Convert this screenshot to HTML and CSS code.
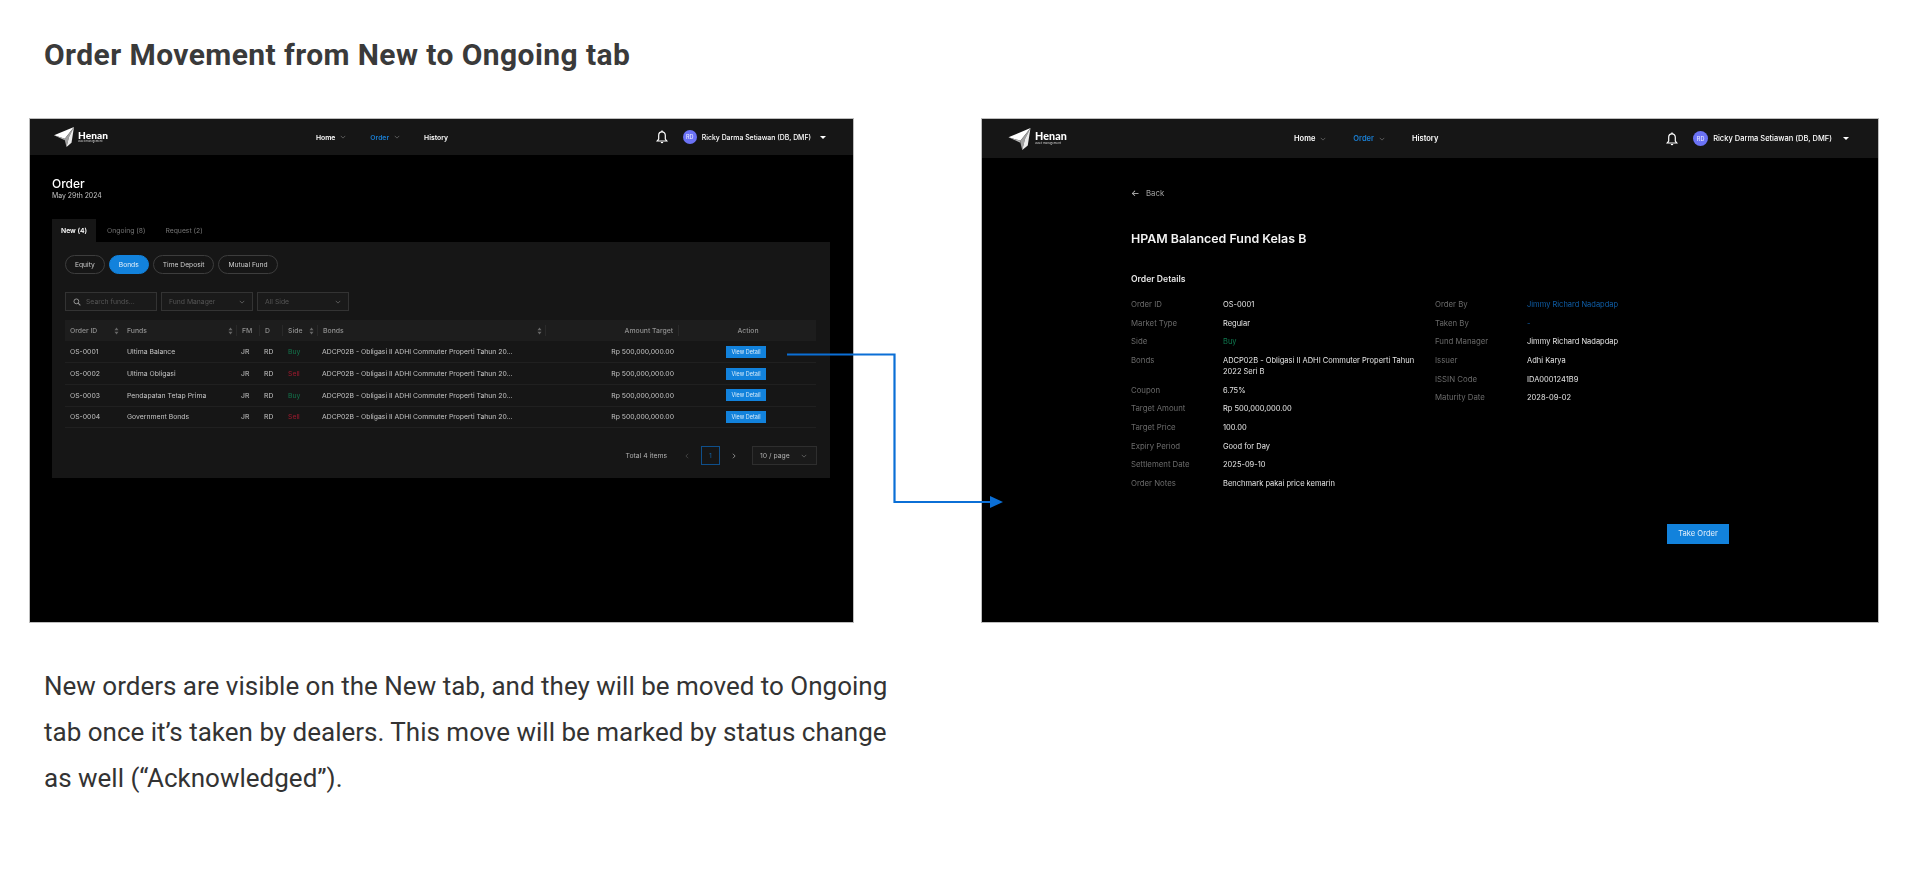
FILE: index.html
```html
<!DOCTYPE html>
<html lang="en">
<head>
<meta charset="utf-8">
<title>Order Movement from New to Ongoing tab</title>
<link rel="stylesheet" href="styles.css">
</head>
<body>
<svg class="sprite" width="0" height="0" aria-hidden="true">
  <symbol id="mark" viewBox="0 0 24 24">
    <polygon points="0,10 24,0 13,14" fill="#fff"/>
    <polygon points="0,10 13,14 13,16" fill="#b9b9b9"/>
    <polygon points="24,0 18,12 15,24 13,16 13,14" fill="#a0a0a0"/>
    <polygon points="24,0 21,19 15,24 18,12" fill="#ececec"/>
  </symbol>
  <symbol id="chev" viewBox="0 0 8 8"><path d="M1 2.5 4 5.5 7 2.5" fill="none" stroke="currentColor" stroke-width=".9"/></symbol>
  <symbol id="bell" viewBox="0 0 12 14">
    <path d="M6 1.8C3.9 1.8 2.7 3.4 2.7 5.3V9L1.2 11H10.8L9.3 9V5.3C9.3 3.4 8.1 1.8 6 1.8Z" fill="none" stroke="#fff" stroke-width="1.2"/>
    <path d="M5.3 0.4H6.7V2H5.3ZM4.7 12H7.3A1.3 1.3 0 0 1 4.7 12Z" fill="#fff"/>
  </symbol>
  <symbol id="sort" viewBox="0 0 6 10"><path d="M3 .5 5.5 4H.5ZM3 9.5 .5 6H5.5Z" fill="#666"/></symbol>
  <symbol id="search" viewBox="0 0 10 10"><circle cx="4.2" cy="4.2" r="3" fill="none" stroke="#999" stroke-width="1.2"/><path d="M6.4 6.4 9.2 9.2" stroke="#999" stroke-width="1.3"/></symbol>
</svg>

<h1 class="title">Order Movement from New to Ongoing tab</h1>

<div class="shots">
  <section class="screen screen-list">
    <header class="topbar">
      <div class="logo">
        <svg class="logo-mark"><use href="#mark"/></svg>
        <div class="logo-text"><b>Henan</b><small>asset management</small></div>
      </div>
      <nav class="nav">
        <span class="nav-item">Home <svg class="chev"><use href="#chev"/></svg></span>
        <span class="nav-item active">Order <svg class="chev"><use href="#chev"/></svg></span>
        <span class="nav-item">History</span>
      </nav>
      <div class="user">
        <svg class="bell"><use href="#bell"/></svg>
        <span class="avatar">RD</span>
        <span class="user-name">Ricky Darma Setiawan (DB, DMF)</span>
        <span class="caret"></span>
      </div>
    </header>
    <main class="list-body">
      <h2 class="page-title">Order</h2>
      <p class="page-date">May 29th 2024</p>
      <div class="tabs">
        <span class="tab active">New (4)</span>
        <span class="tab">Ongoing (8)</span>
        <span class="tab">Request (2)</span>
      </div>
      <div class="panel">
        <div class="pills">
          <span class="pill">Equity</span>
          <span class="pill on">Bonds</span>
          <span class="pill">Time Deposit</span>
          <span class="pill">Mutual Fund</span>
        </div>
        <div class="filters">
          <span class="field field-search"><svg class="search"><use href="#search"/></svg>Search funds...</span>
          <span class="field">Fund Manager <svg class="chev"><use href="#chev"/></svg></span>
          <span class="field">All Side <svg class="chev"><use href="#chev"/></svg></span>
        </div>
        <table class="orders">
          <colgroup>
            <col class="c-id"><col class="c-fund"><col class="c-fm"><col class="c-d"><col class="c-side"><col class="c-bond"><col class="c-amt"><col class="c-act">
          </colgroup>
          <thead>
            <tr>
              <th><div class="th plain">Order ID <svg class="sort"><use href="#sort"/></svg></div></th>
              <th><div class="th">Funds <svg class="sort"><use href="#sort"/></svg></div></th>
              <th><div class="th">FM</div></th>
              <th><div class="th">D</div></th>
              <th><div class="th">Side <svg class="sort"><use href="#sort"/></svg></div></th>
              <th><div class="th">Bonds <svg class="sort"><use href="#sort"/></svg></div></th>
              <th><div class="th th-right">Amount Target</div></th>
              <th><div class="th th-center plain">Action</div></th>
            </tr>
          </thead>
          <tbody>
            <tr><td>OS-0001</td><td>Ultima Balance</td><td>JR</td><td>RD</td><td class="buy">Buy</td><td>ADCP02B - Obligasi II ADHI Commuter Properti Tahun 20...</td><td class="amt">Rp 500,000,000.00</td><td class="act"><span class="btn-view">View Detail</span></td></tr>
            <tr><td>OS-0002</td><td>Ultima Obligasi</td><td>JR</td><td>RD</td><td class="sell">Sell</td><td>ADCP02B - Obligasi II ADHI Commuter Properti Tahun 20...</td><td class="amt">Rp 500,000,000.00</td><td class="act"><span class="btn-view">View Detail</span></td></tr>
            <tr><td>OS-0003</td><td>Pendapatan Tetap Prima</td><td>JR</td><td>RD</td><td class="buy">Buy</td><td>ADCP02B - Obligasi II ADHI Commuter Properti Tahun 20...</td><td class="amt">Rp 500,000,000.00</td><td class="act"><span class="btn-view">View Detail</span></td></tr>
            <tr><td>OS-0004</td><td>Government Bonds</td><td>JR</td><td>RD</td><td class="sell">Sell</td><td>ADCP02B - Obligasi II ADHI Commuter Properti Tahun 20...</td><td class="amt">Rp 500,000,000.00</td><td class="act"><span class="btn-view">View Detail</span></td></tr>
          </tbody>
        </table>
        <div class="pager">
          <span class="pager-total">Total 4 items</span>
          <svg class="pager-prev"><use href="#chev"/></svg>
          <span class="pager-num">1</span>
          <svg class="pager-next"><use href="#chev"/></svg>
          <span class="pager-size">10 / page <svg class="chev"><use href="#chev"/></svg></span>
        </div>
      </div>
    </main>
  </section>

  <section class="screen screen-detail">
    <header class="topbar">
      <div class="logo">
        <svg class="logo-mark"><use href="#mark"/></svg>
        <div class="logo-text"><b>Henan</b><small>asset management</small></div>
      </div>
      <nav class="nav">
        <span class="nav-item">Home <svg class="chev"><use href="#chev"/></svg></span>
        <span class="nav-item active">Order <svg class="chev"><use href="#chev"/></svg></span>
        <span class="nav-item">History</span>
      </nav>
      <div class="user">
        <svg class="bell"><use href="#bell"/></svg>
        <span class="avatar">RD</span>
        <span class="user-name">Ricky Darma Setiawan (DB, DMF)</span>
        <span class="caret"></span>
      </div>
    </header>
    <main class="detail">
      <div class="back"><span class="back-arrow">←</span>Back</div>
      <h2 class="detail-title">HPAM Balanced Fund Kelas B</h2>
      <h3 class="detail-sub">Order Details</h3>
      <div class="detail-cols">
        <dl class="facts">
          <dt>Order ID</dt><dd>OS-0001</dd>
          <dt>Market Type</dt><dd>Regular</dd>
          <dt>Side</dt><dd class="buy">Buy</dd>
          <dt>Bonds</dt><dd>ADCP02B - Obligasi II ADHI Commuter Properti Tahun 2022 Seri B</dd>
          <dt>Coupon</dt><dd>6.75%</dd>
          <dt>Target Amount</dt><dd>Rp 500,000,000.00</dd>
          <dt>Target Price</dt><dd>100.00</dd>
          <dt>Expiry Period</dt><dd>Good for Day</dd>
          <dt>Settlement Date</dt><dd>2025-09-10</dd>
          <dt>Order Notes</dt><dd>Benchmark pakai price kemarin</dd>
        </dl>
        <dl class="facts">
          <dt>Order By</dt><dd class="link">Jimmy Richard Nadapdap</dd>
          <dt>Taken By</dt><dd class="link">-</dd>
          <dt>Fund Manager</dt><dd>Jimmy Richard Nadapdap</dd>
          <dt>Issuer</dt><dd>Adhi Karya</dd>
          <dt>ISSIN Code</dt><dd>IDA0001241B9</dd>
          <dt>Maturity Date</dt><dd>2028-09-02</dd>
        </dl>
      </div>
      <div class="detail-actions"><span class="btn-take">Take Order</span></div>
    </main>
  </section>

  <svg class="flow-arrow" viewBox="0 0 216 156" width="216" height="156" aria-hidden="true">
    <path d="M0 2.5H107.5V150H204" fill="none" stroke="#0b6fd6" stroke-width="2.2"/>
    <polygon points="203,144 216,150 203,156" fill="#0b6fd6"/>
  </svg>
</div>

<p class="caption">New orders are visible on the New tab, and they will be moved to Ongoing<br>tab once it’s taken by dealers. This move will be marked by status change<br>as well (“Acknowledged”).</p>
</body>
</html>
```

FILE: styles.css
```css
* { box-sizing: border-box; }
html, body { margin: 0; padding: 0; background: #fff; }
body { width: 1920px; height: 873px; overflow: hidden; font-family: "Roboto", "Liberation Sans", sans-serif; }
.sprite { position: absolute; }

.title {
  margin: 0 0 46px;
  padding: 38px 0 0 44px;
  font: 700 30px/34px "Roboto", "Liberation Sans", sans-serif;
  letter-spacing: .42px;
  color: #3a3a3a;
}

.shots { position: relative; display: flex; align-items: flex-start; padding-left: 29px; gap: 127px; }

.screen {
  height: 505px;
  background: #000;
  border: 1px solid #bdbdbd;
  font-family: "Inter", "Liberation Sans", sans-serif;
  overflow: hidden;
  filter: blur(.35px);
}
.screen-list { width: 825px; }
.screen-detail { width: 898px; }

/* Top bar */
.topbar { display: flex; align-items: center; background: #161616; color: #fff; font-weight: 600; }
.screen-list .topbar { height: 36px; padding: 0 27px 0 24px; font-size: 6.8px; }
.screen-detail .topbar { height: 39px; padding: 0 29px 0 26px; font-size: 7.5px; }
.logo { display: flex; align-items: center; gap: 4px; }
.screen-list .logo { width: 262px; }
.screen-detail .logo { width: 286px; }
.logo-mark { display: block; }
.screen-list .logo-mark { width: 20px; height: 20px; }
.screen-detail .logo-mark { width: 23px; height: 22px; }
.logo-text { display: flex; flex-direction: column; font-family: "Lato", sans-serif; }
.logo-text b { line-height: 1; font-weight: 900; letter-spacing: .01em; }
.logo-text small { line-height: 1.1; font-weight: 400; color: #ccc; }
.screen-list .logo-text b { font-size: 10.1px; }
.screen-list .logo-text small { font-size: 3px; }
.screen-detail .logo-text b { font-size: 10.7px; }
.screen-detail .logo-text small { font-size: 3.2px; }
.nav { display: flex; align-items: center; gap: 24px; }
.screen-detail .nav { gap: 27px; }
.nav-item { display: flex; align-items: center; gap: 5px; white-space: nowrap; }
.nav-item.active { color: #1a7fd4; }
.chev { width: 6px; height: 6px; color: #777; flex: none; }
.user { margin-left: auto; display: flex; align-items: center; }
.bell { width: 12px; height: 14px; margin-right: 15px; }
.avatar {
  width: 14px; height: 14px; border-radius: 50%;
  display: flex; align-items: center; justify-content: center;
  background: #6b72f5; color: #e8e8ff; font-size: 5.5px; font-weight: 500; margin-right: 5px;
}
.screen-detail .avatar { width: 15px; height: 15px; }
.user-name { white-space: nowrap; font-weight: 500; }
.screen-list .user-name { font-size: 6.9px; }
.caret { width: 0; height: 0; margin-left: 9px; border: 3px solid transparent; border-top: 3px solid #fff; border-bottom: 0; }
.screen-detail .caret { margin-left: 11px; }

/* List screen */
.list-body { padding: 21px 23px 0 22px; }
.page-title { margin: 0; font-size: 12px; line-height: 15px; font-weight: 500; color: #fff; }
.page-date { margin: 0 0 18px; font-size: 6.9px; line-height: 10px; color: #c4c4c4; }
.tabs { display: flex; height: 23px; font-size: 6.8px; color: #757575; }
.tab { display: flex; align-items: center; padding: 0 9px; margin-right: 1px; }
.tab + .tab { padding: 0 10px; margin-right: 0; }
.tab.active { background: #161616; color: #fff; font-weight: 600; }
.panel { height: 236px; background: #161616; padding: 13px 13px 0 13px; }
.pills { display: flex; gap: 4px; font-size: 6.7px; color: #cfcfcf; }
.pill { height: 19px; padding: 0 9px; display: flex; align-items: center; border: 1px solid #3d3d3d; border-radius: 10px; }
.pill.on { background: #1282dc; border-color: #1282dc; color: #e8f2fb; }
.filters { display: flex; gap: 4px; margin-top: 18px; font-size: 6.8px; color: #555; }
.field {
  width: 92px; height: 19px; padding: 0 7px;
  display: flex; align-items: center; justify-content: space-between;
  background: #1a1a1a; border: 1px solid #333;
}
.field-search { justify-content: flex-start; gap: 5px; }
.search { width: 8px; height: 8px; }
.orders { width: 751px; margin-top: 9px; border-collapse: collapse; table-layout: fixed; font-size: 6.85px; }
.c-id { width: 57px; } .c-fund { width: 115px; } .c-fm { width: 23px; } .c-d { width: 23px; }
.c-side { width: 35px; } .c-bond { width: 228px; } .c-amt { width: 133px; } .c-act { width: 137px; }
.orders th { height: 21px; padding: 0; background: #1d1d1d; color: #909090; font-weight: 500; text-align: left; }
.th { display: flex; align-items: center; justify-content: space-between; height: 11px; padding: 0 3px 0 5px; border-right: 1px solid #292929; }
.th.plain { border-right: 0; }
.th-right { justify-content: flex-end; padding-right: 5px; }
.th-center { justify-content: center; padding-right: 4px; }
.sort { width: 5px; height: 8px; }
.orders td { height: 21.7px; padding: 0 5px 0 4px; color: #c4c4c4; border-bottom: 1px solid #202020; white-space: nowrap; overflow: hidden; }
.orders td:nth-child(-n+2) { padding-left: 5px; }
.orders .amt { text-align: right; }
.orders .act { text-align: center; padding: 0 3px 0 0; }
.orders .buy { color: #13754c; padding-left: 5px; }
.orders .sell { color: #9c1a2e; padding-left: 5px; }
.btn-view { display: inline-flex; align-items: center; justify-content: center; width: 40px; height: 12px; background: #1282dc; color: #d8ebfa; font-size: 5.5px; vertical-align: middle; }
.pager { display: flex; align-items: center; justify-content: flex-end; margin-top: 18px; font-size: 6.85px; color: #b0b0b0; }
.pager-total { margin-right: 17px; }
.pager-prev, .pager-next { width: 6px; height: 6px; color: #555; }
.pager-prev { transform: rotate(90deg); margin-right: 11px; }
.pager-next { transform: rotate(-90deg); color: #bbb; margin-left: 11px; margin-right: 15px; }
.pager-num { width: 19px; height: 19px; display: flex; align-items: center; justify-content: center; border: 1px solid #0f4f8a; color: #14619f; }
.pager-size { width: 65px; height: 19px; padding: 0 9px 0 7px; display: flex; align-items: center; justify-content: space-between; background: #1a1a1a; border: 1px solid #2e2e2e; }

/* Detail screen */
.detail { padding: 29px 149px 0 149px; }
.back { display: flex; align-items: center; font-size: 7.8px; line-height: 12px; color: #a0a0a0; }
.back-arrow { width: 15px; color: #ccc; font-size: 9px; }
.detail-title { margin: 31px 0 0; font-size: 12.4px; line-height: 18px; font-weight: 600; color: #f4f4f4; }
.detail-sub { margin: 25px 0 0; font-size: 8.6px; line-height: 12px; font-weight: 600; color: #e6e6e6; }
.detail-cols { display: flex; gap: 12px; margin-top: 14px; }
.facts { margin: 0; display: grid; grid-template-columns: 92px 200px; row-gap: 7.67px; align-content: start; line-height: 11px; }
.facts dt { font-size: 7.8px; color: #6a6a6a; }
.facts dd { margin: 0; font-size: 7.5px; color: #e6e6e6; }
.facts dd.buy { color: #0f7a50; }
.facts dd.link { color: #0f5ea8; }
.detail-actions { display: flex; justify-content: flex-end; margin-top: 35px; }
.btn-take { width: 62px; height: 20px; display: flex; align-items: center; justify-content: center; background: #1282dc; color: #e6f1fb; font-size: 7.6px; }

/* Connector between the two screens */
.flow-arrow { position: absolute; left: 787px; top: 234px; }

/* Caption */
.caption {
  margin: 40px 0 0 44px;
  font: 400 26px/46px "Roboto", "Liberation Sans", sans-serif;
  color: #333;
}
```
